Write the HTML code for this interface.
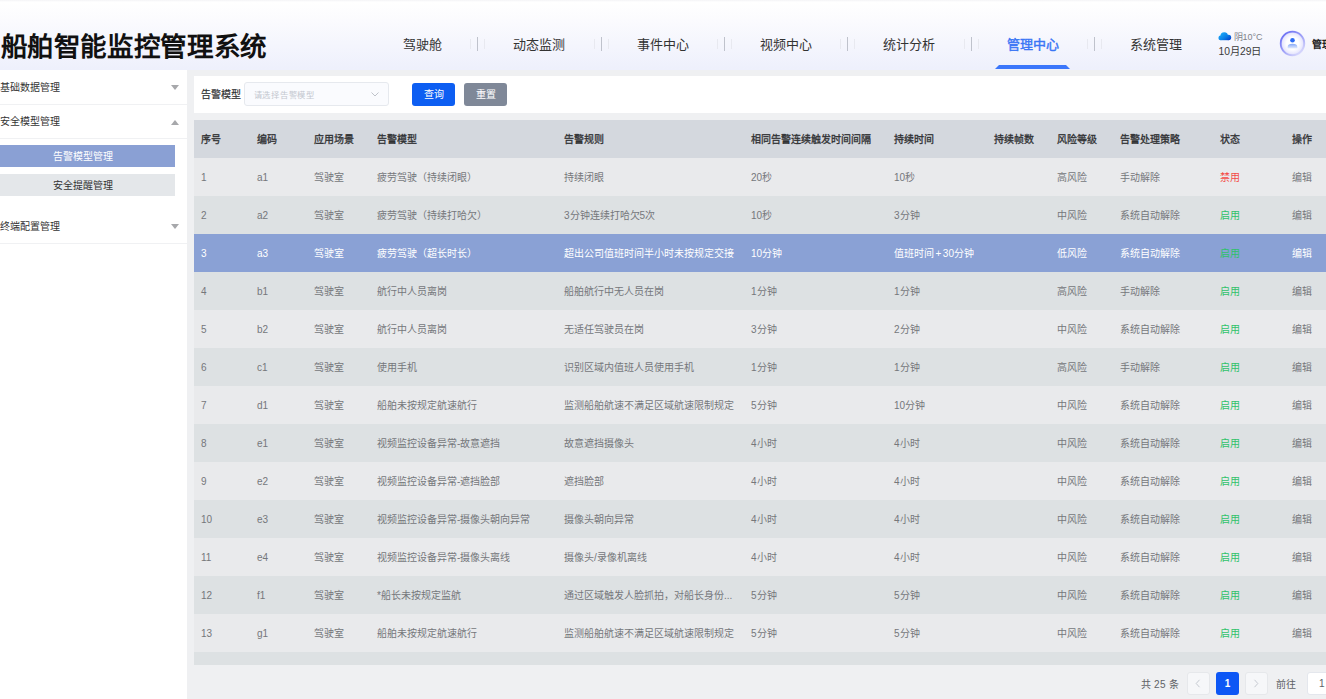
<!DOCTYPE html>
<html lang="zh-CN">
<head>
<meta charset="utf-8">
<style>
*{margin:0;padding:0;box-sizing:border-box}
html,body{width:1326px;height:699px;overflow:hidden;background:#eff0f2;font-family:"Liberation Sans",sans-serif;color:#333;position:relative}
i{font-style:normal}
.hdr{position:absolute;left:0;top:0;width:1326px;height:70px;background:linear-gradient(180deg,#f4f4f6 0,#ffffff 2px,#fbfbfe 20px,#eef0fc 69px)}
.title{position:absolute;left:0.5px;top:31px;letter-spacing:0.65px;font-size:26.5px;font-weight:bold;color:#111;line-height:32px;white-space:nowrap}
.nav{position:absolute;left:367.8px;top:37px;height:16px;display:flex;white-space:nowrap}
.nav a{display:block;padding:0 35.2px;font-size:13px;line-height:16px;color:#333;text-decoration:none}
.nav a.act{color:#3b76f5;font-weight:normal;-webkit-text-stroke:0.45px #3b76f5}
.nav .sp{display:block;position:relative;width:1px;height:14px;margin-top:0px;background:#bfc2cc}
.nav .sp b{position:absolute;left:-7px;top:2px;width:15px;height:10px;border-left:1px solid #e8e9f0;border-right:1px solid #e8e9f0}
.uline{position:absolute;left:995px;top:65px;width:75px;height:4px;background:#3b76fb;clip-path:polygon(4px 0,71px 0,75px 4px,0 4px)}
.cloud{position:absolute;left:1217.5px;top:31.5px}
.wt{position:absolute;left:1233.5px;top:32px;font-size:9px;line-height:11px;color:#80838a}
.dt{position:absolute;left:1218.5px;top:46px;font-size:10.3px;line-height:12px;color:#3a3a3a}
.av{position:absolute;left:1279px;top:30px}
.uname{position:absolute;left:1312px;top:38px;font-size:10px;line-height:14px;color:#222;font-weight:bold;white-space:nowrap}
.side{position:absolute;left:0;top:70px;width:187px;height:629px;background:#fff}
.mi{position:absolute;left:0;width:160px;font-size:10px;color:#333;line-height:14px}
.mline{position:absolute;left:0;width:187px;height:1px;background:#f0f1f3}
.tri{position:absolute;left:171px;width:0;height:0;border-left:4.6px solid transparent;border-right:4.6px solid transparent}
.tri.d{border-top:5px solid #a7a8ab}
.tri.u{border-bottom:5px solid #a7a8ab}
.sub{position:absolute;left:0;width:175px;height:22px;font-size:10px;line-height:23px;text-align:center;padding-right:10px}
.s1{background:#8aa0d4;color:#fff}
.s2{background:#e4e7ea;color:#333}
.card{position:absolute;left:194px;top:76px;width:1132px;height:37px;background:#fff}
.lbl{position:absolute;left:201px;top:88.7px;font-size:10px;color:#303133;line-height:12px;-webkit-text-stroke:0.2px #303133}
.sel{position:absolute;left:244px;top:82px;width:145px;height:24px;border:1px solid #e6e9ee;border-radius:3px;background:#fafbfe}
.ph{position:absolute;left:8.5px;top:7px;font-size:8.3px;letter-spacing:0.75px;color:#c3c7cf;line-height:11px}
.chev{position:absolute;left:126px;top:9px}
.btn{position:absolute;top:83px;width:43px;height:23px;border-radius:3px;color:#fff;font-size:10px;font-weight:500;line-height:23px;text-align:center}
.q{background:#0d5ef2}
.r{background:#7f8898}
.row{position:absolute;left:194px;width:1132px;height:38px}
.row span{position:absolute;top:0;line-height:38px;font-size:10px;white-space:nowrap}
.row span[style]{margin-left:-194px}
.th{background:#d4d8de}
.th span{color:#303133;top:1px;-webkit-text-stroke:0.3px #303133}
.r1{background:#e9eaec}
.r2{background:#dde1e3}
.hl{background:#8aa1d5}
.td span{color:#75777b;top:0.5px}
.hl span{color:#fff}
.red{color:#f44c47!important}
.grn{color:#2fc26a!important}
.pg{position:absolute;left:0;top:672px;height:23px;width:1326px}
.tot{position:absolute;left:1140.5px;top:6px;font-size:10px;letter-spacing:0.35px;line-height:13px;color:#606266}
.pb{position:absolute;top:0;width:23px;height:23px;background:#f6f7f9;border:1px solid #e6e8eb;border-radius:3px}
.pb svg{position:absolute;left:7px;top:6px}
.prev{left:1187px}
.next{left:1244.5px}
.pn{position:absolute;left:1216px;top:0;width:23px;height:23px;background:#0d57f5;border-radius:3px;color:#fff;font-size:10px;font-weight:bold;line-height:23px;text-align:center}
.go{position:absolute;left:1276px;top:6px;font-size:10px;line-height:13px;color:#606266}
.gi{position:absolute;left:1307px;top:0;width:40px;height:23px;background:#fff;border:1px solid #e4e7ed;border-radius:3px;font-size:10px;line-height:21px;color:#606266;padding-left:11px}
</style>
</head>
<body>
<div class="hdr"></div>
<div class="title">船舶智能监控管理系统</div>
<div class="nav"><a>驾驶舱</a><i class="sp"><b></b></i><a>动态监测</a><i class="sp"><b></b></i><a>事件中心</a><i class="sp"><b></b></i><a>视频中心</a><i class="sp"><b></b></i><a>统计分析</a><i class="sp"><b></b></i><a class="act">管理中心</a><i class="sp"><b></b></i><a>系统管理</a></div>
<div class="uline"></div>
<svg class="cloud" width="14" height="9" viewBox="0 0 14 9"><defs><linearGradient id="cg" gradientUnits="userSpaceOnUse" x1="4" y1="0" x2="11" y2="9"><stop offset="0" stop-color="#1caaf8"/><stop offset="0.55" stop-color="#0b7ee6"/><stop offset="1" stop-color="#0440cf"/></linearGradient></defs><g fill="url(#cg)"><circle cx="6.2" cy="4.0" r="3.8"/><circle cx="2.7" cy="5.9" r="2.3"/><circle cx="10.5" cy="5.5" r="2.7"/><rect x="2.7" y="5" width="7.8" height="3.2"/></g></svg>
<div class="wt">阴10°C</div>
<div class="dt">10月29日</div>
<svg class="av" width="27" height="27" viewBox="0 0 27 27"><defs><linearGradient id="rg" x1="0.15" y1="0.1" x2="0.85" y2="0.95"><stop offset="0" stop-color="#6f73f4"/><stop offset="0.6" stop-color="#a9abf8"/><stop offset="1" stop-color="#dcdcfc"/></linearGradient><radialGradient id="ag" cx="0.5" cy="0.5" r="0.5"><stop offset="0.5" stop-color="#ffffff"/><stop offset="0.85" stop-color="#e9e9fd"/><stop offset="1" stop-color="#c9cafb"/></radialGradient><linearGradient id="bg2" x1="0" y1="0" x2="0" y2="1"><stop offset="0" stop-color="#85a8f7"/><stop offset="1" stop-color="#e8eefd"/></linearGradient></defs><circle cx="13.5" cy="13.5" r="11.8" fill="url(#ag)" stroke="url(#rg)" stroke-width="1.8"/><circle cx="13.5" cy="10.2" r="2.3" fill="#2c6cf5"/><path d="M8.6 18.6L8.6 17C8.6 14.7 10.6 13.8 13.5 13.8 16.4 13.8 18.4 14.7 18.4 17L18.4 18.6Z" fill="url(#bg2)"/></svg>
<div class="uname">管理员</div>
<div class="side"></div>
<div class="mi" style="top:80.8px">基础数据管理</div><i class="tri d" style="top:85px"></i><div class="mline" style="top:104px"></div>
<div class="mi" style="top:114.8px">安全模型管理</div><i class="tri u" style="top:119.5px"></i><div class="mline" style="top:138px"></div>
<div class="sub s1" style="top:145px">告警模型管理</div>
<div class="sub s2" style="top:174px">安全提醒管理</div>
<div class="mi" style="top:219.8px">终端配置管理</div><i class="tri d" style="top:224px"></i><div class="mline" style="top:243px"></div>
<div class="card"></div>
<div class="lbl">告警模型</div>
<div class="sel"><span class="ph">请选择告警模型</span><svg class="chev" width="8" height="5" viewBox="0 0 8 5"><path d="M0.5 0.5L4 4 7.5 0.5" fill="none" stroke="#b8bcc4" stroke-width="0.9"/></svg></div>
<div class="btn q" style="left:412px">查询</div>
<div class="btn r" style="left:464px">重置</div>
<div class="row th" style="top:120px"><span style="left:201px">序号</span><span style="left:257px">编码</span><span style="left:314px">应用场景</span><span style="left:377px">告警模型</span><span style="left:564px">告警规则</span><span style="left:751px">相同告警连续触发时间间隔</span><span style="left:894px">持续时间</span><span style="left:994px">持续帧数</span><span style="left:1057px">风险等级</span><span style="left:1120px">告警处理策略</span><span style="left:1220px">状态</span><span style="left:1292px">操作</span></div>
<div class="row td r1" style="top:158px"><span style="left:201px">1</span><span style="left:257px">a1</span><span style="left:314px">驾驶室</span><span style="left:377px">疲劳驾驶（持续闭眼）</span><span style="left:564px">持续闭眼</span><span style="left:751px">20秒</span><span style="left:894px">10秒</span><span style="left:1057px">高风险</span><span style="left:1120px">手动解除</span><span class="red" style="left:1220px">禁用</span><span style="left:1292px">编辑</span></div>
<div class="row td r2" style="top:196px"><span style="left:201px">2</span><span style="left:257px">a2</span><span style="left:314px">驾驶室</span><span style="left:377px">疲劳驾驶（持续打哈欠）</span><span style="left:564px">3分钟连续打哈欠5次</span><span style="left:751px">10秒</span><span style="left:894px">3分钟</span><span style="left:1057px">中风险</span><span style="left:1120px">系统自动解除</span><span class="grn" style="left:1220px">启用</span><span style="left:1292px">编辑</span></div>
<div class="row td hl" style="top:234px"><span style="left:201px">3</span><span style="left:257px">a3</span><span style="left:314px">驾驶室</span><span style="left:377px">疲劳驾驶（超长时长）</span><span style="left:564px">超出公司值班时间半小时未按规定交接</span><span style="left:751px">10分钟</span><span style="left:894px">值班时间<b style="font-weight:normal;margin:0 1.5px">+</b>30分钟</span><span style="left:1057px">低风险</span><span style="left:1120px">系统自动解除</span><span class="grn" style="left:1220px">启用</span><span style="left:1292px">编辑</span></div>
<div class="row td r2" style="top:272px"><span style="left:201px">4</span><span style="left:257px">b1</span><span style="left:314px">驾驶室</span><span style="left:377px">航行中人员离岗</span><span style="left:564px">船舶航行中无人员在岗</span><span style="left:751px">1分钟</span><span style="left:894px">1分钟</span><span style="left:1057px">高风险</span><span style="left:1120px">手动解除</span><span class="grn" style="left:1220px">启用</span><span style="left:1292px">编辑</span></div>
<div class="row td r1" style="top:310px"><span style="left:201px">5</span><span style="left:257px">b2</span><span style="left:314px">驾驶室</span><span style="left:377px">航行中人员离岗</span><span style="left:564px">无适任驾驶员在岗</span><span style="left:751px">3分钟</span><span style="left:894px">2分钟</span><span style="left:1057px">中风险</span><span style="left:1120px">系统自动解除</span><span class="grn" style="left:1220px">启用</span><span style="left:1292px">编辑</span></div>
<div class="row td r2" style="top:348px"><span style="left:201px">6</span><span style="left:257px">c1</span><span style="left:314px">驾驶室</span><span style="left:377px">使用手机</span><span style="left:564px">识别区域内值班人员使用手机</span><span style="left:751px">1分钟</span><span style="left:894px">1分钟</span><span style="left:1057px">高风险</span><span style="left:1120px">手动解除</span><span class="grn" style="left:1220px">启用</span><span style="left:1292px">编辑</span></div>
<div class="row td r1" style="top:386px"><span style="left:201px">7</span><span style="left:257px">d1</span><span style="left:314px">驾驶室</span><span style="left:377px">船舶未按规定航速航行</span><span style="left:564px">监测船舶航速不满足区域航速限制规定</span><span style="left:751px">5分钟</span><span style="left:894px">10分钟</span><span style="left:1057px">中风险</span><span style="left:1120px">系统自动解除</span><span class="grn" style="left:1220px">启用</span><span style="left:1292px">编辑</span></div>
<div class="row td r2" style="top:424px"><span style="left:201px">8</span><span style="left:257px">e1</span><span style="left:314px">驾驶室</span><span style="left:377px">视频监控设备异常-故意遮挡</span><span style="left:564px">故意遮挡摄像头</span><span style="left:751px">4小时</span><span style="left:894px">4小时</span><span style="left:1057px">中风险</span><span style="left:1120px">系统自动解除</span><span class="grn" style="left:1220px">启用</span><span style="left:1292px">编辑</span></div>
<div class="row td r1" style="top:462px"><span style="left:201px">9</span><span style="left:257px">e2</span><span style="left:314px">驾驶室</span><span style="left:377px">视频监控设备异常-遮挡脸部</span><span style="left:564px">遮挡脸部</span><span style="left:751px">4小时</span><span style="left:894px">4小时</span><span style="left:1057px">中风险</span><span style="left:1120px">系统自动解除</span><span class="grn" style="left:1220px">启用</span><span style="left:1292px">编辑</span></div>
<div class="row td r2" style="top:500px"><span style="left:201px">10</span><span style="left:257px">e3</span><span style="left:314px">驾驶室</span><span style="left:377px">视频监控设备异常-摄像头朝向异常</span><span style="left:564px">摄像头朝向异常</span><span style="left:751px">4小时</span><span style="left:894px">4小时</span><span style="left:1057px">中风险</span><span style="left:1120px">系统自动解除</span><span class="grn" style="left:1220px">启用</span><span style="left:1292px">编辑</span></div>
<div class="row td r1" style="top:538px"><span style="left:201px">11</span><span style="left:257px">e4</span><span style="left:314px">驾驶室</span><span style="left:377px">视频监控设备异常-摄像头离线</span><span style="left:564px">摄像头/录像机离线</span><span style="left:751px">4小时</span><span style="left:894px">4小时</span><span style="left:1057px">中风险</span><span style="left:1120px">系统自动解除</span><span class="grn" style="left:1220px">启用</span><span style="left:1292px">编辑</span></div>
<div class="row td r2" style="top:576px"><span style="left:201px">12</span><span style="left:257px">f1</span><span style="left:314px">驾驶室</span><span style="left:377px">*船长未按规定监航</span><span style="left:564px">通过区域触发人脸抓拍，对船长身份...</span><span style="left:751px">5分钟</span><span style="left:894px">5分钟</span><span style="left:1057px">中风险</span><span style="left:1120px">系统自动解除</span><span class="grn" style="left:1220px">启用</span><span style="left:1292px">编辑</span></div>
<div class="row td r1" style="top:614px"><span style="left:201px">13</span><span style="left:257px">g1</span><span style="left:314px">驾驶室</span><span style="left:377px">船舶未按规定航速航行</span><span style="left:564px">监测船舶航速不满足区域航速限制规定</span><span style="left:751px">5分钟</span><span style="left:894px">5分钟</span><span style="left:1057px">中风险</span><span style="left:1120px">系统自动解除</span><span class="grn" style="left:1220px">启用</span><span style="left:1292px">编辑</span></div>
<div class="row r2" style="top:652px;height:13px"></div>
<div class="pg"><span class="tot">共 25 条</span><i class="pb prev"><svg width="6" height="9" viewBox="0 0 6 9"><path d="M4.5 0.8L1.2 4.5 4.5 8.2" fill="none" stroke="#c0c4cc" stroke-width="0.9"/></svg></i><i class="pn">1</i><i class="pb next"><svg width="6" height="9" viewBox="0 0 6 9"><path d="M1.5 0.8L4.8 4.5 1.5 8.2" fill="none" stroke="#c0c4cc" stroke-width="0.9"/></svg></i><span class="go">前往</span><i class="gi">1</i></div>
</body>
</html>
